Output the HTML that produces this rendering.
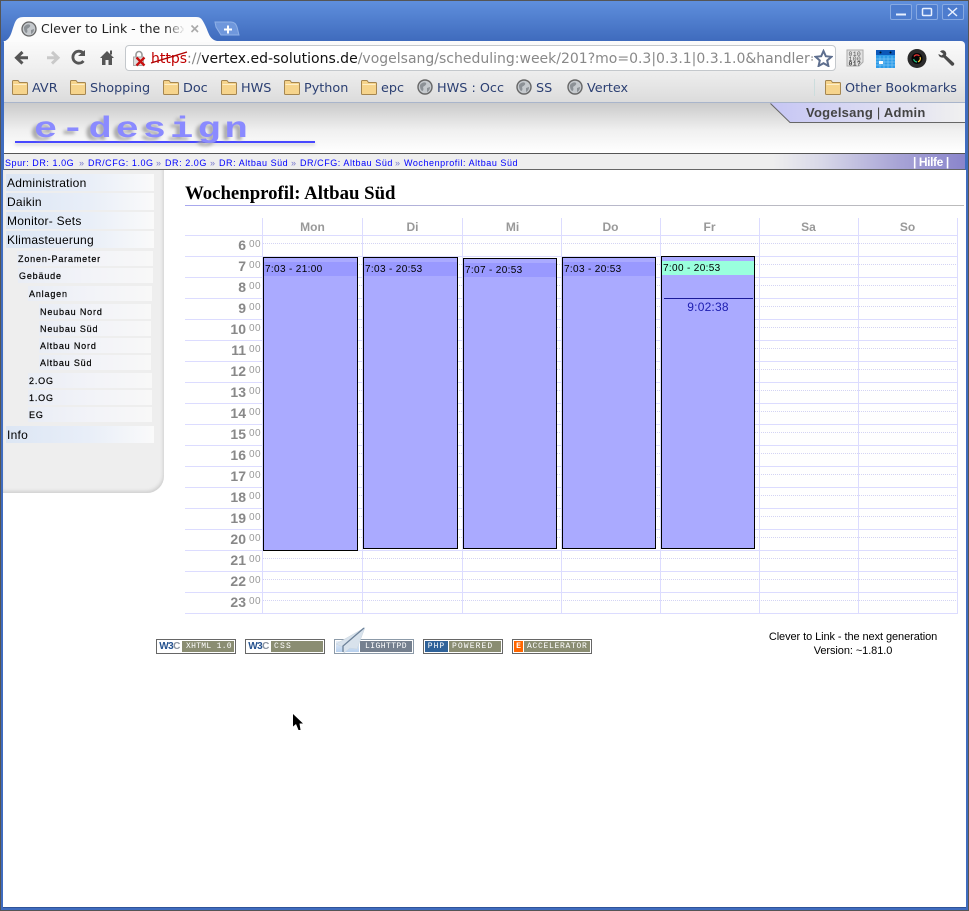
<!DOCTYPE html>
<html><head><meta charset="utf-8"><title>Clever to Link</title>
<style>
html,body{margin:0;padding:0;background:#fff}
body{width:969px;height:911px;position:relative;overflow:hidden;font-family:"Liberation Sans",sans-serif}
div,span.a,svg.a{position:absolute}
.bm{font:12.8px/16px "DejaVu Sans",sans-serif;color:#2b3f72;top:81px;white-space:nowrap}
.ic{position:absolute;top:79px}
.m,.s{white-space:nowrap;color:#000;overflow:hidden}
.m{left:6px;width:148px;height:17px;background:linear-gradient(90deg,#dce6f4,#e8eef8 55%,#fafafa);font-size:12px;line-height:19px;letter-spacing:.25px;text-indent:1px}
.s{height:15px;background:linear-gradient(90deg,#e9edf5,#f2f3f8 50%,#f8f8f8);font-size:9px;line-height:17px;letter-spacing:.83px;text-indent:1px;-webkit-text-stroke:.2px #000}
.bc{top:158px;font-size:9px;line-height:11px;color:#00f;letter-spacing:.55px;white-space:nowrap}
.h{left:185px;width:61px;text-align:right;font-weight:bold;font-size:14px;line-height:16px;color:#888}
.z{left:249px;margin-top:-1px;font-size:10px;line-height:12px;color:#999;letter-spacing:.5px}
.d{top:220px;text-align:center;font-weight:bold;font-size:12px;line-height:14px;color:#999;width:99px}
.b{background:#aaf;border:1px solid #000;box-sizing:border-box}
.l{left:0;right:0;height:14px;background:#99f;font-size:10px;line-height:16px;letter-spacing:.35px;color:#000;text-indent:1px;white-space:nowrap}
.bd{top:639px;width:80px;height:15px;box-sizing:border-box;border:1px solid #666;background:#fff;overflow:hidden}
.bd .lf{left:1px;top:1px;height:11px;width:23px;font:bold 10px/11px "Liberation Sans",sans-serif;color:#25528f;letter-spacing:-.6px;text-align:center;white-space:nowrap}
.bd .lf i{font-style:normal;color:#8a93a0}
.bd .rt{left:25px;top:1px;height:11px;width:52px;background:#8a8d72;color:#fff;font:8px/11px "Liberation Mono",monospace;letter-spacing:.35px;text-indent:3px;white-space:nowrap;overflow:hidden}
</style></head>
<body>
<!-- window frame -->
<div style="left:0;top:0;width:969px;height:911px;background:#3f6cbf"></div>
<div style="left:0;top:0;width:969px;height:41px;background:linear-gradient(#5f8fdd,#3f6bbd);border-top:1px solid #555;box-sizing:border-box"></div>
<div style="left:0;top:0;width:1px;height:911px;background:#555"></div>
<div style="left:968px;top:0;width:1px;height:911px;background:#555"></div>
<div style="left:0;top:910px;width:969px;height:1px;background:#555"></div>
<div style="left:3px;top:907px;width:963px;height:1px;background:#2f5398"></div>
<!-- window buttons -->
<div style="left:890px;top:4px;width:20px;height:14px;border:1px solid #87a9e2;border-radius:2px;background:#4d7cce"></div>
<div style="left:916px;top:4px;width:20px;height:14px;border:1px solid #87a9e2;border-radius:2px;background:#4d7cce"></div>
<div style="left:942px;top:4px;width:20px;height:14px;border:1px solid #87a9e2;border-radius:2px;background:#4d7cce"></div>
<svg class="a" style="left:890px;top:4px" width="75" height="16"><path d="M6 10.500H16" stroke="#e8f0ff" stroke-width="2"/><rect x="32.500" y="4.500" width="9" height="7" rx="1" fill="none" stroke="#e8f0ff" stroke-width="1.500"/><path d="M58 4L67 12M67 4L58 12" stroke="#e8f0ff" stroke-width="1.500"/></svg>
<!-- toolbar -->
<div style="left:4px;top:41px;width:961px;height:61px;border-radius:0 4px 0 0;background:linear-gradient(#fbfbfb,#eeeeee 30px,#dcdcdc)"></div>
<div style="left:4px;top:102px;width:961px;height:1px;background:#a9b5cb"></div>
<!-- tabs -->
<svg class="a" style="left:3px;top:15px" width="240" height="28"><path d="M0 27C8 24 8 18 11 10C13 4 15 2 21 2H193C198 2 199 4 202 10C206 18 206 24 214 26V27Z" fill="#fcfcfc"/><path d="M212 7H228C231 7 233 9 234 12L236 20H218L213 12Z" fill="#6f97dc" stroke="#8fb0e6" stroke-width="1"/><path d="M221 14.500H229M225 10.500V18.500" stroke="#fff" stroke-width="2"/></svg>
<svg class="a" style="left:21px;top:21px" width="16" height="16"><circle cx="8" cy="8" r="7" fill="#c5c9cd" stroke="#666" stroke-width="1.300"/><path d="M3 6C5 3 8 3 9 4C10 6 7 7 6 8C7 11 6 12 5 12C3 10 3 8 3 6ZM10 9L13 8C13 10 12 12 10 13Z" fill="#8c9196"/></svg>
<div style="left:41px;top:21px;width:143px;height:16px;overflow:hidden;white-space:nowrap;font:12.500px/16px 'DejaVu Sans',sans-serif;color:#222">Clever to Link - the next generation</div>
<div style="left:165px;top:21px;width:20px;height:16px;background:linear-gradient(90deg,rgba(252,252,252,0),#fcfcfc)"></div>
<svg class="a" style="left:190px;top:24px" width="10" height="10"><path d="M1.500 1.500L8 8M8 1.500L1.500 8" stroke="#aaa" stroke-width="1.600"/></svg>
<!-- nav icons -->
<svg class="a" style="left:12px;top:48px" width="108" height="20">
<path d="M16 9.800H6M10.500 4L4.500 9.800L10.500 15.500" fill="none" stroke="#555" stroke-width="3"/>
<path d="M45 9.800H35M40 4L46 9.800L40 15.500" fill="none" stroke="#c9c9c9" stroke-width="3"/>
<path d="M71 4.800A6 6 0 1 0 71.500 13" fill="none" stroke="#555" stroke-width="2.800"/><path d="M66 8H73V2Z" fill="#555"/>
<path d="M88 10L95 3L102 10H100V17H96.500V12H93.500V17H90V10Z" fill="#555"/><rect x="98" y="2.500" width="2" height="4" fill="#555"/>
</svg>
<!-- url bar -->
<div style="left:125px;top:45px;width:711px;height:26px;box-sizing:border-box;background:#fff;border:1px solid #c4c8cc;border-radius:4px"></div>
<svg class="a" style="left:132px;top:50px" width="17" height="17"><path d="M4 7V4.500A3 3 0 0 1 10 4.500V7" fill="none" stroke="#999" stroke-width="1.600"/><rect x="1.500" y="7" width="10" height="8.500" fill="#ddd" stroke="#aaa"/><path d="M4.500 7.500L12.500 15.500M12.500 7.500L4.500 15.500" stroke="#c81010" stroke-width="2.300"/></svg>
<div style="left:151px;top:50px;width:662px;height:19px;overflow:hidden;white-space:nowrap;font:14px/18px 'DejaVu Sans',sans-serif;color:#888"><span style="color:#c00000">https</span>://<span style="color:#111">vertex.ed-solutions.de</span>/vogelsang/scheduling:week/201?mo=0.3|0.3.1|0.3.1.0&amp;handler=scheduling</div>
<svg class="a" style="left:150px;top:50px" width="38" height="16"><path d="M1 13L37 2" stroke="#b00000" stroke-width="1.300"/></svg>
<svg class="a" style="left:814px;top:49px" width="19" height="18"><path d="M9.500 2L11.800 7.200L17.400 7.800L13.200 11.500L14.400 17L9.500 14.200L4.600 17L5.800 11.500L1.600 7.800L7.200 7.200Z" fill="#fff" stroke="#5e6f8f" stroke-width="2"/></svg>
<!-- extensions -->
<svg class="a" style="left:846px;top:48px" width="120" height="21">
<path d="M1 2H17V14L13 18H1Z" fill="#e2e2e2" stroke="#aaa"/><text x="2.500" y="8" font-family="Liberation Mono" font-size="6.500" fill="#555" letter-spacing=".3">010</text><text x="2.500" y="13" font-family="Liberation Mono" font-size="6.500" fill="#555" letter-spacing=".3">100</text><text x="2.500" y="17.500" font-family="Liberation Mono" font-size="6.500" font-weight="bold" fill="#444" letter-spacing=".3">01?</text>
<rect x="30" y="2" width="19" height="5" fill="#0c57b8"/><rect x="30" y="7" width="19" height="13" fill="#2d9be8"/><circle cx="34.500" cy="4.500" r="1" fill="#012"/><circle cx="44.500" cy="4.500" r="1" fill="#012"/><path d="M30 11H49M30 14H49M30 17H49M34 8V20M38 8V20M42 8V20M46 8V20" stroke="#7cc4f2" stroke-width=".7"/><rect x="33" y="13" width="4" height="3" fill="#fff"/>
<circle cx="71" cy="10.500" r="9.500" fill="#2a2a2a"/><circle cx="71" cy="10.500" r="5.500" fill="#050505"/><path d="M68 8.500A3.500 3.500 0 0 1 73.500 8" stroke="#e33" stroke-width="1.200" fill="none"/><path d="M74 9A3.500 3.500 0 0 1 72 13.800" stroke="#fc3" stroke-width="1.200" fill="none"/><path d="M71 14A3.500 3.500 0 0 1 67.700 11" stroke="#2c8" stroke-width="1.200" fill="none"/>
<path d="M94 3.500C96 1.500 99 2 100 4.500C100.500 6 100.200 7 99.800 7.500L108 15C109 16.500 107 18.500 105.500 17.500L97.500 9.500C95 10 92.500 8.500 92.500 6L95.500 7.500L97.500 6Z" fill="#4a4a4a"/>
</svg>
<!-- bookmarks -->
<svg width="0" height="0" style="position:absolute"><defs><symbol id="f" viewBox="0 0 16 15"><path d="M.5 3V1.500C.5 1 1 .5 1.500 .5H6L7.500 2.500H14.500C15 2.500 15.500 3 15.500 3.500V13.500C15.500 14 15 14.500 14.500 14.500H1.500C1 14.500 .5 14 .5 13.500Z" fill="#f6d48c" stroke="#a58650"/><path d="M1.500 4.500H14.500" stroke="#fdeec8"/></symbol><symbol id="g" viewBox="0 0 16 16"><circle cx="8" cy="8" r="7" fill="#c5c9cd" stroke="#666" stroke-width="1.400"/><path d="M3 6C5 3 8 3 9 4C10 6 7 7 6 8C7 11 6 12 5 12C3 10 3 8 3 6ZM10 9L13 8C13 10 12 12 10 13Z" fill="#8c9196"/></symbol></defs></svg>
<svg class="ic" style="left:12px;top:80px" width="16" height="15"><use href="#f"/></svg><div class="bm" style="left:32px">AVR</div>
<svg class="ic" style="left:70px;top:80px" width="16" height="15"><use href="#f"/></svg><div class="bm" style="left:90px">Shopping</div>
<svg class="ic" style="left:163px;top:80px" width="16" height="15"><use href="#f"/></svg><div class="bm" style="left:183px">Doc</div>
<svg class="ic" style="left:221px;top:80px" width="16" height="15"><use href="#f"/></svg><div class="bm" style="left:241px">HWS</div>
<svg class="ic" style="left:284px;top:80px" width="16" height="15"><use href="#f"/></svg><div class="bm" style="left:304px">Python</div>
<svg class="ic" style="left:361px;top:80px" width="16" height="15"><use href="#f"/></svg><div class="bm" style="left:381px">epc</div>
<svg class="ic" style="left:417px;top:79px" width="16" height="16"><use href="#g"/></svg><div class="bm" style="left:437px">HWS : Occ</div>
<svg class="ic" style="left:516px;top:79px" width="16" height="16"><use href="#g"/></svg><div class="bm" style="left:536px">SS</div>
<svg class="ic" style="left:567px;top:79px" width="16" height="16"><use href="#g"/></svg><div class="bm" style="left:587px">Vertex</div>
<div style="left:814px;top:79px;width:1px;height:17px;background:#cdd"></div>
<svg class="ic" style="left:825px;top:80px" width="16" height="15"><use href="#f"/></svg><div class="bm" style="left:845px">Other Bookmarks</div>
<!-- page header -->
<div style="left:4px;top:103px;width:961px;height:50px;background:linear-gradient(#cacaca,#f0f0f0 55%,#fff)"></div>
<div style="left:15px;top:141px;width:300px;height:2px;background:#4848ff;box-shadow:0 2px 3px #ccc"></div>
<div style="left:34px;top:113px;white-space:nowrap;font:bold 30px/34px 'Liberation Mono',monospace;color:#8a8aff;letter-spacing:3.100px;transform:scaleX(1.290);transform-origin:0 0;text-shadow:-3px 3px 3px #aaa">e-design</div>
<svg class="a" style="left:770px;top:103px" width="195" height="21"><defs><linearGradient id="t"><stop offset="0" stop-color="#c6c6f4"/><stop offset=".55" stop-color="#dcdcf2"/><stop offset="1" stop-color="#f0f0f0"/></linearGradient></defs><path d="M0 0H195V19H20Z" fill="url(#t)"/><path d="M195 19.500H20L.5 .5" fill="none" stroke="#666"/></svg>
<div style="left:806px;top:105px;font-weight:bold;font-size:13px;line-height:16px;color:#444;letter-spacing:.25px;white-space:nowrap">Vogelsang <span style="font-weight:normal">|</span> Admin</div>
<!-- breadcrumb -->
<div style="left:4px;top:153px;width:961px;height:1px;background:#555"></div>
<div style="left:4px;top:154px;width:961px;height:15px;background:linear-gradient(90deg,#eee,#eee 80%,#d8d8e8 85%,#a8a4d6 93%,#8a85cc)"></div>
<div style="left:4px;top:169px;width:961px;height:1px;background:#666"></div>
<div class="bc" style="left:5px">Spur: DR: 1.0G</div><div class="bc" style="left:79px;color:#77c">»</div>
<div class="bc" style="left:88px">DR/CFG: 1.0G</div><div class="bc" style="left:156px;color:#77c">»</div>
<div class="bc" style="left:165px">DR: 2.0G</div><div class="bc" style="left:210px;color:#77c">»</div>
<div class="bc" style="left:219px">DR: Altbau Süd</div><div class="bc" style="left:291px;color:#77c">»</div>
<div class="bc" style="left:300px">DR/CFG: Altbau Süd</div><div class="bc" style="left:395px;color:#77c">»</div>
<div class="bc" style="left:404px">Wochenprofil: Altbau Süd</div>
<div style="left:913px;top:154px;font-weight:bold;font-size:12px;line-height:16px;letter-spacing:-.4px;color:#fff;white-space:nowrap">| Hilfe |</div>
<!-- main -->
<div style="left:3px;top:170px;width:963px;height:737px;background:#fff"></div>
<!-- sidebar -->
<div style="left:3px;top:170px;width:161px;height:323px;background:#eee;border-radius:0 0 17px 0;box-shadow:inset -1px -2px 3px #d0d0d0"></div>
<div class="m" style="top:174px">Administration</div>
<div class="m" style="top:193px">Daikin</div>
<div class="m" style="top:212px">Monitor- Sets</div>
<div class="m" style="top:231px">Klimasteuerung</div>
<div class="s" style="left:17px;width:136px;top:251px">Zonen-Parameter</div>
<div class="s" style="left:18px;width:135px;top:268px">Gebäude</div>
<div class="s" style="left:28px;width:124px;top:286px">Anlagen</div>
<div class="s" style="left:39px;width:112px;top:304px">Neubau Nord</div>
<div class="s" style="left:39px;width:112px;top:321px">Neubau Süd</div>
<div class="s" style="left:39px;width:112px;top:338px">Altbau Nord</div>
<div class="s" style="left:39px;width:112px;top:355px">Altbau Süd</div>
<div class="s" style="left:28px;width:124px;top:373px">2.OG</div>
<div class="s" style="left:28px;width:124px;top:390px">1.OG</div>
<div class="s" style="left:28px;width:124px;top:407px">EG</div>
<div class="m" style="top:426px">Info</div>
<!-- title -->
<div style="left:185px;top:183px;font:bold 18.800px/21px 'Liberation Serif',serif;color:#000;white-space:nowrap">Wochenprofil: Altbau Süd</div>
<div style="left:185px;top:205px;width:779px;height:1px;background:linear-gradient(90deg,#a8a8ee,#b8b8cc 50%,#bbb)"></div>
<!-- grid -->
<svg class="a" style="left:0;top:0" width="969" height="640">
<path d="M185 235.500H958M185 256.500H958M185 277.500H958M185 298.500H958M185 319.500H958M185 340.500H958M185 361.500H958M185 382.500H958M185 403.500H958M185 424.500H958M185 445.500H958M185 466.500H958M185 487.500H958M185 508.500H958M185 529.500H958M185 550.500H958M185 571.500H958M185 592.500H958M185 613.500H958M262.500 218V614M362.500 218V614M462.500 218V614M561.500 218V614M660.500 218V614M759.500 218V614M858.500 218V614M957.500 218V614" stroke="#dcdcff" fill="none"/>
<path d="M263 243.500H957M263 264.500H957M263 285.500H957M263 306.500H957M263 327.500H957M263 348.500H957M263 369.500H957M263 390.500H957M263 411.500H957M263 432.500H957M263 453.500H957M263 474.500H957M263 495.500H957M263 516.500H957M263 537.500H957M263 558.500H957M263 579.500H957M263 600.500H957" stroke="#d4d4f4" stroke-dasharray="1 1" fill="none"/>
</svg>
<div class="d" style="left:263px">Mon</div><div class="d" style="left:363px">Di</div><div class="d" style="left:463px">Mi</div><div class="d" style="left:561px">Do</div><div class="d" style="left:660px">Fr</div><div class="d" style="left:759px">Sa</div><div class="d" style="left:858px">So</div>
<div class="h" style="top:237px">6</div><div class="z" style="top:240px">00</div>
<div class="h" style="top:258px">7</div><div class="z" style="top:261px">00</div>
<div class="h" style="top:279px">8</div><div class="z" style="top:282px">00</div>
<div class="h" style="top:300px">9</div><div class="z" style="top:303px">00</div>
<div class="h" style="top:321px">10</div><div class="z" style="top:324px">00</div>
<div class="h" style="top:342px">11</div><div class="z" style="top:345px">00</div>
<div class="h" style="top:363px">12</div><div class="z" style="top:366px">00</div>
<div class="h" style="top:384px">13</div><div class="z" style="top:387px">00</div>
<div class="h" style="top:405px">14</div><div class="z" style="top:408px">00</div>
<div class="h" style="top:426px">15</div><div class="z" style="top:429px">00</div>
<div class="h" style="top:447px">16</div><div class="z" style="top:450px">00</div>
<div class="h" style="top:468px">17</div><div class="z" style="top:471px">00</div>
<div class="h" style="top:489px">18</div><div class="z" style="top:492px">00</div>
<div class="h" style="top:510px">19</div><div class="z" style="top:513px">00</div>
<div class="h" style="top:531px">20</div><div class="z" style="top:534px">00</div>
<div class="h" style="top:552px">21</div><div class="z" style="top:555px">00</div>
<div class="h" style="top:573px">22</div><div class="z" style="top:576px">00</div>
<div class="h" style="top:594px">23</div><div class="z" style="top:597px">00</div>
<!-- blocks -->
<div class="b" style="left:263px;top:257px;width:95px;height:294px"><div class="l" style="top:4px">7:03 - 21:00</div></div>
<div class="b" style="left:363px;top:257px;width:95px;height:292px"><div class="l" style="top:4px">7:03 - 20:53</div></div>
<div class="b" style="left:463px;top:258px;width:94px;height:291px"><div class="l" style="top:4px">7:07 - 20:53</div></div>
<div class="b" style="left:562px;top:257px;width:94px;height:292px"><div class="l" style="top:4px">7:03 - 20:53</div></div>
<div class="b" style="left:661px;top:256px;width:94px;height:293px"><div class="l" style="top:4px;background:#9fd">7:00 - 20:53</div></div>
<div style="left:664px;top:298px;width:89px;height:1px;background:#1a1a99"></div>
<div style="left:661px;top:300px;width:94px;text-align:center;font-size:12px;line-height:14px;color:#1c1cb0;letter-spacing:.2px">9:02:38</div>
<!-- badges -->
<div class="bd" style="left:156px"><div class="lf">W3<i>C</i></div><div class="rt" style="text-indent:4px;letter-spacing:.3px">XHTML 1.0</div></div>
<div class="bd" style="left:245px"><div class="lf">W3<i>C</i></div><div class="rt" style="text-indent:3px;letter-spacing:1.200px">CSS</div></div>
<div class="bd" style="left:334px;border-color:#8c9aa8"><div class="lf" style="background:linear-gradient(#e6eef8,#b8d0ee)"></div><div class="rt" style="background:#75808f;text-indent:5px;letter-spacing:.45px">LIGHTTPD</div></div>
<svg class="a" style="left:335px;top:627px" width="32" height="27"><path d="M30 .5L1 17L8 20L9 26L15 21L22 22Z" fill="#d8e2ec" stroke="#c8d4de" stroke-width=".5"/><path d="M29 1L8 19L8 25" fill="none" stroke="#6c8198" stroke-width="1.300"/></svg>
<div class="bd" style="left:423px"><div class="lf" style="background:#2f6299;color:#fff;font:8px/11px 'Liberation Mono',monospace;letter-spacing:1px">PHP</div><div class="rt" style="text-indent:3px;letter-spacing:1.100px">POWERED</div></div>
<div class="bd" style="left:512px"><div class="lf" style="background:#f60;color:#fff;width:9px;font:bold 8px/11px 'Liberation Mono',monospace;letter-spacing:0">E</div><div class="rt" style="left:11px;width:66px;text-indent:3px;letter-spacing:.7px">ACCELERATOR</div></div>
<!-- footer text -->
<div style="left:753px;top:630px;width:200px;text-align:center;font-size:11px;line-height:14px;color:#000;letter-spacing:-.08px">Clever to Link - the next generation<br>Version: ~1.81.0</div>
<!-- cursor -->
<svg class="a" style="left:292px;top:713px" width="12" height="18"><path d="M1 1V13.500L4 11L6.500 17H8.500L7.500 10.500H11Z" fill="#000"/></svg>
</body></html>
